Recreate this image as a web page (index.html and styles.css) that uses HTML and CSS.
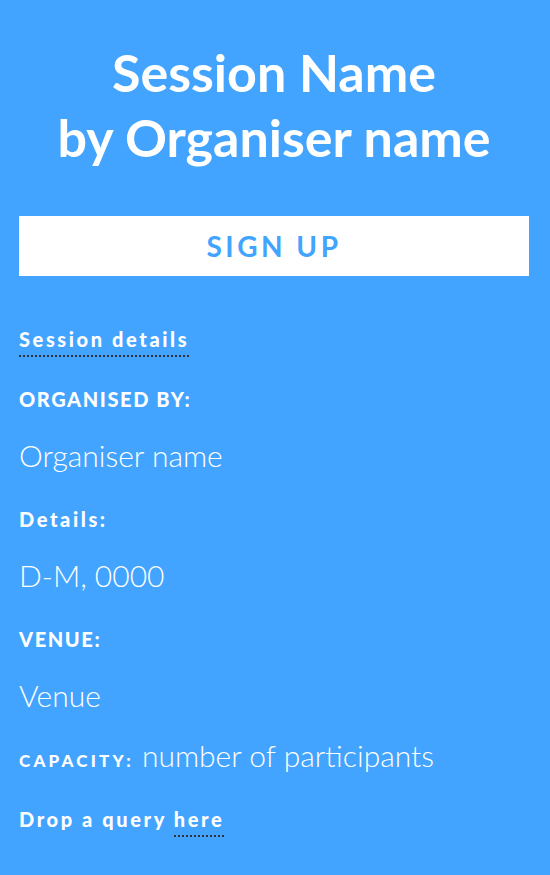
FILE: index.html
```html
<!DOCTYPE html>
<html lang="en">
<head>
<meta charset="utf-8">
<title>Session</title>
<link rel="stylesheet" href="styles.css">
</head>
<body>
<main class="page">
  <h1 class="title">Session Name<br>by Organiser name</h1>
  <a class="signup" href="#">SIGN UP</a>
  <div class="details">
    <p class="row label"><a class="link" href="#">Session details</a></p>
    <p class="row label upper">ORGANISED BY:</p>
    <p class="row value">Organiser name</p>
    <p class="row label">Details:</p>
    <p class="row value">D-M, 0000</p>
    <p class="row label upper">VENUE:</p>
    <p class="row value">Venue</p>
    <p class="row value"><span class="cap">CAPACITY:</span> number of participants</p>
    <p class="row label">Drop a query <a class="link" href="#">here</a></p>
  </div>
</main>
</body>
</html>
```
FILE: styles.css
```css
html, body {
  margin: 0;
  padding: 0;
  background: #42a4fe;
  height: 100%;
}
body {
  font-family: "Source Sans Pro", Lato, "Liberation Sans", sans-serif;
  color: #fff;
}
.page {
  padding: 40px 21px 0 19px;
  display: flex;
  flex-direction: column;
}
.title {
  margin: 0;
  text-align: center;
  font-size: 52px;
  line-height: 65px;
  font-weight: 700;
}
.signup {
  margin-top: 46px;
  height: 60px;
  background: #fff;
  color: #42a4fe;
  display: flex;
  align-items: center;
  justify-content: center;
  font-size: 28px;
  font-weight: 700;
  letter-spacing: 3.5px;
  text-decoration: none;
}
.details {
  margin-top: 33px;
  display: flex;
  flex-direction: column;
}
.row {
  margin: 0;
  height: 60px;
  white-space: nowrap;
}
.label {
  font-size: 20px;
  line-height: 60px;
  font-weight: 900;
  letter-spacing: 2.6px;
}
.label.upper {
  letter-spacing: 1.6px;
}
.value {
  font-size: 30px;
  line-height: 52px;
  font-weight: 300;
}
.cap {
  font-size: 17px;
  font-weight: 900;
  letter-spacing: 3.2px;
}
.link {
  color: #fff;
  text-decoration: none;
  border-bottom: 2px dotted #333;
  padding-bottom: 4px;
}
```
